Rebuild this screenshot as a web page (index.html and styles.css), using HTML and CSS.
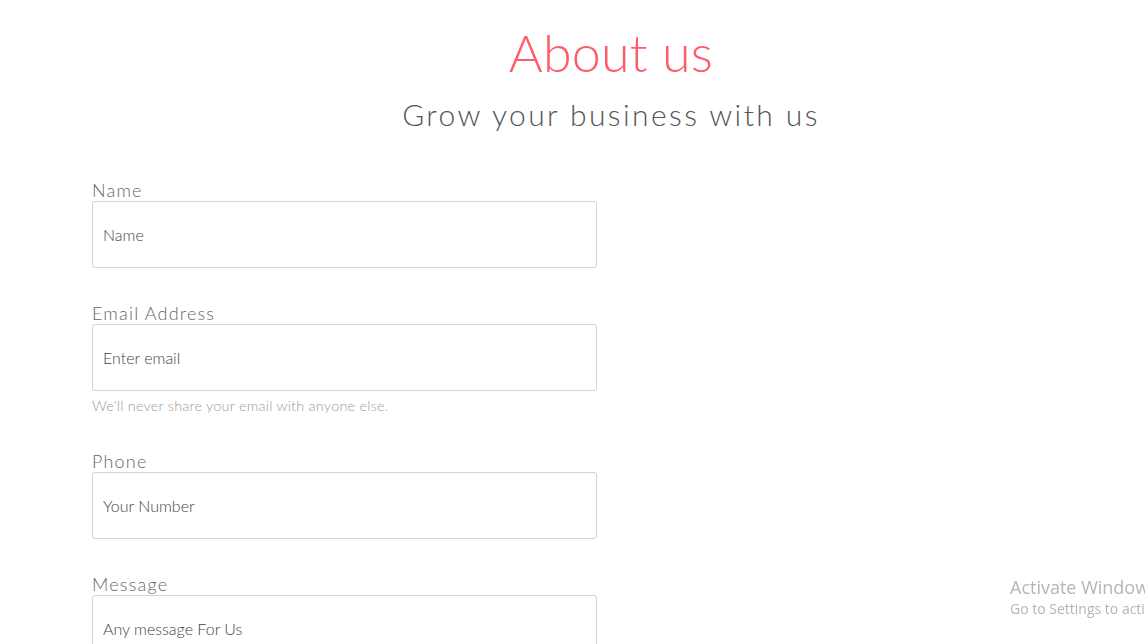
FILE: index.html
```html
<!DOCTYPE html>
<html lang="en">
<head>
<meta charset="utf-8">
<title>About us</title>
<link rel="stylesheet" href="styles.css">
</head>
<body>
<main class="page">
  <header class="hero">
    <h1 class="hero-title">About us</h1>
    <p class="hero-sub">Grow your business with us</p>
  </header>
  <form class="contact-form">
    <div class="field">
      <label class="field-label" for="name">Name</label>
      <input class="field-input" id="name" type="text" placeholder="Name">
    </div>
    <div class="field">
      <label class="field-label" for="email">Email Address</label>
      <input class="field-input" id="email" type="email" placeholder="Enter email">
      <small class="field-help">We'll never share your email with anyone else.</small>
    </div>
    <div class="field">
      <label class="field-label" for="phone">Phone</label>
      <input class="field-input" id="phone" type="text" placeholder="Your Number">
    </div>
    <div class="field">
      <label class="field-label" for="message">Message</label>
      <input class="field-input" id="message" type="text" placeholder="Any message For Us">
    </div>
  </form>
</main>
<div class="activate">
  <div class="activate-title">Activate Windows</div>
  <div class="activate-sub">Go to Settings to activate Windows.</div>
</div>
</body>
</html>
```

FILE: styles.css
```css
html, body {
  margin: 0;
  padding: 0;
  background: #ffffff;
  overflow: hidden;
}

body {
  font-family: "Lato", "Open Sans", sans-serif;
  font-weight: 300;
  color: #555;
}

.page {
  width: 1145px;
  height: 644px;
}

.hero {
  display: flex;
  flex-direction: column;
  align-items: center;
  padding-top: 20px;
  padding-left: 77px;
}

.hero-title {
  margin: 0;
  font-size: 52px;
  line-height: 64px;
  font-weight: 300;
  color: #ff5c6a;
  letter-spacing: 0.2px;
}

.hero-sub {
  margin: 12px 0 0;
  font-size: 30px;
  line-height: 36px;
  font-weight: 300;
  letter-spacing: 2.4px;
  color: #555;
}

.contact-form {
  display: flex;
  flex-direction: column;
  gap: 34px;
  width: 505px;
  margin: 47px 0 0 92px;
}

.field {
  display: flex;
  flex-direction: column;
}

.field-label {
  font-size: 18px;
  line-height: 22px;
  letter-spacing: 1.2px;
  color: #666;
}

.field-input {
  box-sizing: border-box;
  width: 505px;
  height: 67px;
  margin: 0;
  padding: 0 10px;
  border: 1px solid #ced4da;
  border-radius: 3px;
  font-family: inherit;
  font-weight: 300;
  font-size: 16px;
  color: #444;
  background: #fff;
  outline: none;
}

.field-input::placeholder {
  color: #444;
  opacity: 1;
}

.field-help {
  margin-top: 4px;
  font-size: 14.5px;
  line-height: 21px;
  letter-spacing: 0.2px;
  color: #a09a9a;
}

.activate {
  position: fixed;
  left: 1010px;
  top: 576px;
  white-space: nowrap;
  font-family: "Open Sans", "Noto Sans", sans-serif;
  font-weight: 400;
  color: #b5b5b5;
}

.activate-title {
  font-size: 18px;
  line-height: 22px;
}

.activate-sub {
  font-size: 14px;
  line-height: 20px;
  margin-top: 1px;
}
```
